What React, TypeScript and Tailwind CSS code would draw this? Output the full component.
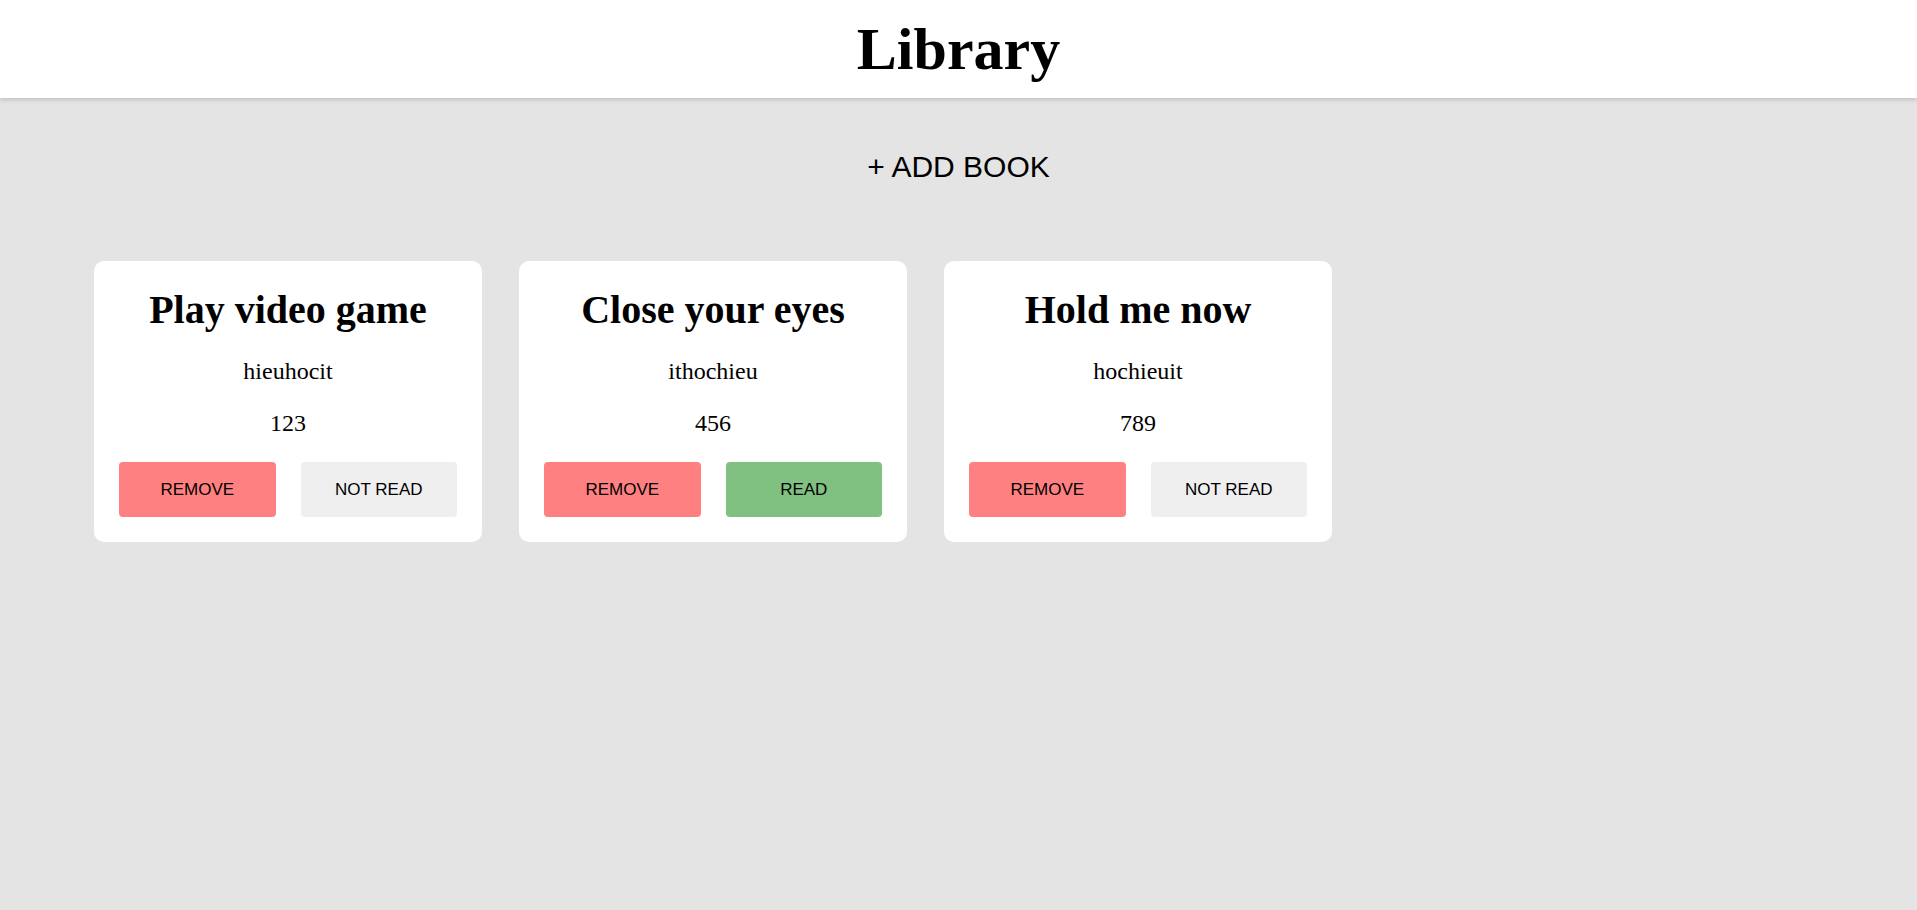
import React from "react";

type Book = { title: string; author: string; pages: string; read: boolean };

const books: Book[] = [
  { title: "Play video game", author: "hieuhocit", pages: "123", read: false },
  { title: "Close your eyes", author: "ithochieu", pages: "456", read: true },
  { title: "Hold me now", author: "hochieuit", pages: "789", read: false },
];

function Card({ book }: { book: Book }) {
  return (
    <div className="w-[388px] bg-white rounded-[10px] p-[25px] flex flex-col items-center gap-[25px] text-black">
      <h2 className="m-0 text-[40px] font-bold leading-[normal] font-['Liberation_Serif',serif]">
        {book.title}
      </h2>
      <p className="m-0 text-[24px] leading-[normal] font-['Liberation_Serif',serif]">{book.author}</p>
      <p className="m-0 text-[24px] leading-[normal] font-['Liberation_Serif',serif]">{book.pages}</p>
      <div className="grid grid-cols-2 gap-[25px] w-full">
        <button className="h-[55px] rounded-[4px] bg-[#ff8080] text-[17px] text-black font-['Liberation_Sans',Arial,sans-serif]">
          REMOVE
        </button>
        {book.read ? (
          <button className="h-[55px] rounded-[4px] bg-[#80c080] text-[17px] text-black font-['Liberation_Sans',Arial,sans-serif]">
            READ
          </button>
        ) : (
          <button className="h-[55px] rounded-[4px] bg-[#efefef] text-[17px] text-black font-['Liberation_Sans',Arial,sans-serif]">
            NOT READ
          </button>
        )}
      </div>
    </div>
  );
}

export default function App() {
  return (
    <div className="h-screen overflow-hidden bg-[#e4e4e4] flex flex-col">
      <header className="h-[98px] shrink-0 bg-white flex items-center justify-center shadow-[0_2px_4px_rgba(0,0,0,0.15)] relative z-10">
        <h1 className="m-0 text-[60px] font-bold leading-[normal] text-black font-['Liberation_Serif',serif]">
          Library
        </h1>
      </header>
      <div className="flex justify-center pt-[52px]">
        <button className="text-[30px] leading-[normal] text-black font-['Liberation_Sans',Arial,sans-serif]">
          + ADD BOOK
        </button>
      </div>
      <div className="flex gap-[37px] pl-[94px] mt-[77px]">
        {books.map((b) => (
          <Card key={b.title} book={b} />
        ))}
      </div>
    </div>
  );
}
